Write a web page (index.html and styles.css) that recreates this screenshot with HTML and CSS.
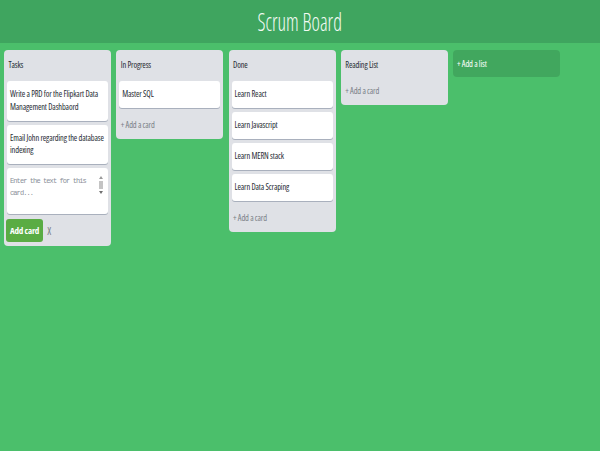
FILE: index.html
```html
<!DOCTYPE html>
<html lang="en">
<head>
<meta charset="utf-8">
<title>Scrum Board</title>
<link rel="stylesheet" href="styles.css">
</head>
<body>
<header class="topbar">
  <h1 class="board-title">Scrum Board</h1>
</header>
<main class="board">
  <section class="list">
    <h2 class="list-title">Tasks</h2>
    <div class="cards">
      <div class="card">Write a PRD for the Flipkart Data Management Dashbaord</div>
      <div class="card">Email John regarding the database indexing</div>
      <div class="composer">
        <textarea class="composer-input" placeholder="Enter the text for this card..."></textarea>
        <div class="fake-scroll" aria-hidden="true">
          <span class="arrow-up"></span>
          <span class="thumb"></span>
          <span class="arrow-down"></span>
        </div>
      </div>
    </div>
    <div class="composer-actions">
      <button class="btn-add" type="button">Add card</button>
      <span class="btn-close">X</span>
    </div>
  </section>

  <section class="list">
    <h2 class="list-title">In Progress</h2>
    <div class="cards">
      <div class="card">Master SQL</div>
    </div>
    <div class="add-card">+ Add a card</div>
  </section>

  <section class="list">
    <h2 class="list-title">Done</h2>
    <div class="cards">
      <div class="card">Learn React</div>
      <div class="card">Learn Javascript</div>
      <div class="card">Learn MERN stack</div>
      <div class="card">Learn Data Scraping</div>
    </div>
    <div class="add-card">+ Add a card</div>
  </section>

  <section class="list">
    <h2 class="list-title">Reading List</h2>
    <div class="add-card">+ Add a card</div>
  </section>

  <div class="add-list">+ Add a list</div>
</main>
</body>
</html>
```

FILE: styles.css
```css
html,
body {
  margin: 0;
  min-height: 100%;
  background: #4bbf6b;
}

body {
  font-family: "Open Sans", "Liberation Sans", sans-serif;
  font-stretch: 75%;
  font-weight: 380;
  letter-spacing: -0.15px;
  color: #262b33;
}

.topbar {
  height: 43px;
  background: #3fa55f;
  display: flex;
  align-items: center;
  justify-content: center;
}

.board-title {
  margin: 0;
  font-weight: 300;
  font-size: 25px;
  line-height: 1;
  letter-spacing: 0;
  color: #f3fbf4;
  transform: scaleX(0.8);
}

.board {
  display: flex;
  align-items: flex-start;
  gap: 5.25px;
  padding: 7px 0 0 4px;
}

.list {
  width: 107px;
  flex: none;
  box-sizing: border-box;
  background: #dfe1e6;
  border-radius: 4px;
  padding: 0 3px 4px;
}

.list-title {
  margin: 0;
  padding: 9px 1.5px 7px;
  font-size: 8.4px;
  line-height: 12px;
  font-weight: 380;
}

.cards {
  padding-top: 3px;
}

.card {
  background: #fff;
  border-radius: 3px;
  box-shadow: 0 1px 0 rgba(9, 30, 66, 0.25);
  padding: 7px 3px 7.5px;
  margin-bottom: 4px;
  font-size: 8.4px;
  line-height: 12.5px;
}

.composer {
  position: relative;
  background: #fff;
  border-radius: 3px;
  box-shadow: 0 1px 0 rgba(9, 30, 66, 0.25);
  margin-bottom: 5px;
  height: 46px;
  display: flex;
}

.composer-input {
  flex: 1;
  min-width: 0;
  border: none;
  outline: none;
  resize: none;
  background: transparent;
  padding: 7px 12px 7px 3px;
  margin: 0;
  font-family: "Liberation Mono", "DejaVu Sans Mono", monospace;
  font-size: 7px;
  letter-spacing: -0.9px;
  line-height: 12px;
  color: #262b33;
  overflow: hidden;
}

.composer-input::placeholder {
  color: #8a8f98;
}

.fake-scroll {
  position: absolute;
  top: 8px;
  right: 5px;
  width: 4px;
  display: flex;
  flex-direction: column;
  align-items: center;
  gap: 2px;
}

.arrow-up {
  width: 0;
  height: 0;
  border-left: 2px solid transparent;
  border-right: 2px solid transparent;
  border-bottom: 3px solid #9a9a9a;
}

.arrow-down {
  width: 0;
  height: 0;
  border-left: 2px solid transparent;
  border-right: 2px solid transparent;
  border-top: 3px solid #6f6f6f;
}

.thumb {
  width: 4px;
  height: 8px;
  background: #c4c4c4;
}

.composer-actions {
  display: flex;
  align-items: center;
  gap: 4px;
}

.btn-add {
  height: 23px;
  border: none;
  border-radius: 3px;
  background: #5aac44;
  color: #fff;
  font-family: "Open Sans", "Liberation Sans", sans-serif;
  font-stretch: 75%;
  font-weight: bold;
  font-size: 9px;
  letter-spacing: -0.2px;
  padding: 0 4px;
  margin: 0 0 0 -1px;
}

.btn-close {
  font-size: 10px;
  color: #7a7f87;
}

.add-card {
  padding: 7px 1.5px 4px;
  font-size: 8.4px;
  line-height: 12px;
  color: #7a7f87;
}

.add-list {
  width: 107px;
  flex: none;
  box-sizing: border-box;
  background: rgba(0, 0, 0, 0.12);
  border-radius: 4px;
  padding: 8px 4px;
  font-size: 8.4px;
  line-height: 11px;
  color: #fff;
}
```
